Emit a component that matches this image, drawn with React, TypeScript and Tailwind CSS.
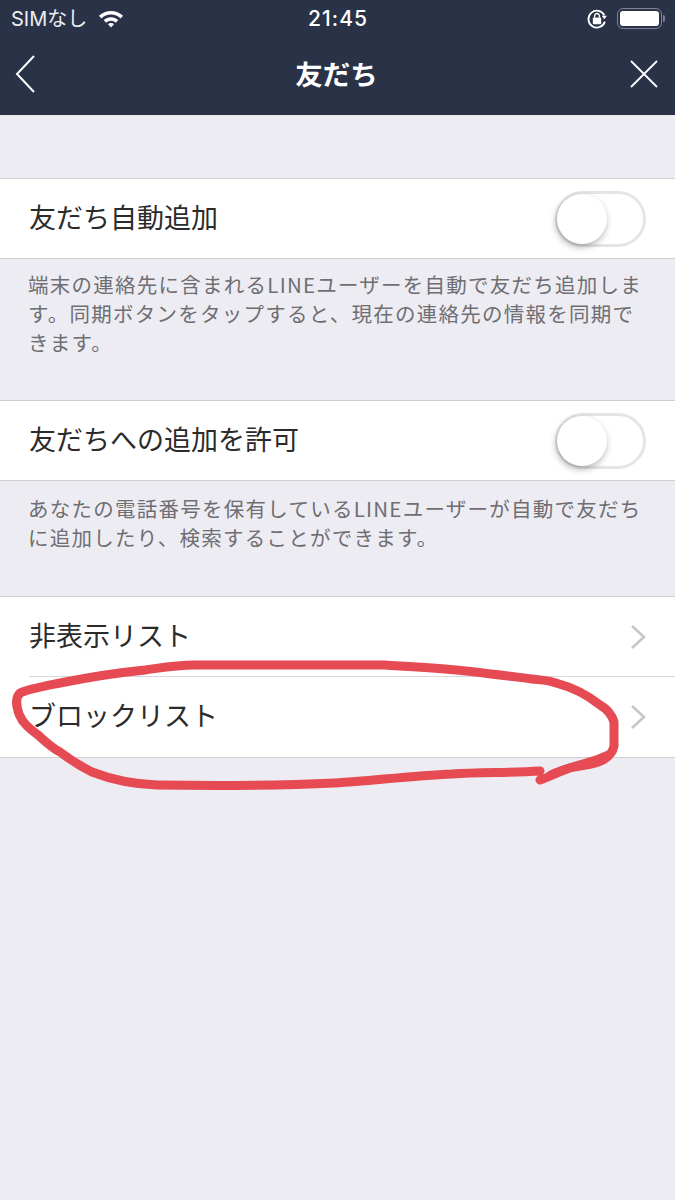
import React from "react";

const font = { fontFamily: '"Noto Sans CJK JP", "Liberation Sans", sans-serif' };

function Toggle() {
  return (
    <div className="relative h-[56px] w-[91px] rounded-full border-[3px] border-[#e5e5e7] bg-white">
      <div className="absolute left-[-1px] top-[0px] h-[50px] w-[50px] rounded-full bg-white shadow-[-1px_3px_7px_rgba(0,0,0,0.3)]" />
    </div>
  );
}

function ToggleRow({ label }: { label: string }) {
  return (
    <div className="flex h-[81px] items-center justify-between border-y border-[#d0d0d3] bg-white pl-[29px] pr-[29px]">
      <span className="pb-[5px] text-[27px] leading-none text-[#2b2b2b]">{label}</span>
      <Toggle />
    </div>
  );
}

function Chevron() {
  return (
    <svg width="16" height="26" viewBox="0 0 16 26" fill="none" stroke="#c6c6c9" strokeWidth="2.6">
      <path d="M2 2 L14 13 L2 24" />
    </svg>
  );
}

function LinkRow({ label, last }: { label: string; last?: boolean }) {
  return (
    <div className="flex h-[80px] items-center bg-white pl-[29px]">
      <div className={`flex h-full flex-1 items-center justify-between pr-[29px] ${last ? "" : "border-b border-[#d8d8da]"}`}>
        <span className="pb-[5px] text-[27px] leading-none text-[#2b2b2b]">{label}</span>
        <Chevron />
      </div>
    </div>
  );
}

export default function App() {
  return (
    <div style={font} className="relative h-[1200px] w-[675px] overflow-hidden bg-[#edecf2]">
      <header className="h-[115px] bg-[#293247] text-white">
        <div className="flex h-[37px] items-center justify-between pl-[11px] pr-[10px]">
          <div className="flex flex-1 items-center gap-[11px]">
            <span className="text-[20px] leading-none text-[#eceef2]" style={{ fontFamily: '"Inter", "Noto Sans CJK JP", sans-serif' }}>SIMなし</span>
            <svg width="26" height="20" viewBox="0 0 26 20" fill="#fff">
              <path d="M13 2C8.4 2 4.3 3.8 1 6.8l2.4 2.6C5.9 7 9.3 5.6 13 5.6s7.1 1.4 9.6 3.8L25 6.8C21.7 3.8 17.6 2 13 2Z" />
              <path d="M13 8.2c-2.8 0-5.3 1.1-7.3 2.9l2.4 2.6c1.3-1.2 3-2 4.9-2s3.6.8 4.9 2l2.4-2.6c-2-1.8-4.5-2.9-7.3-2.9Z" />
              <path d="M13 14c-1.2 0-2.2.5-3 1.2l3 3.3 3-3.3c-.8-.7-1.8-1.2-3-1.2Z" />
            </svg>
          </div>
          <span className="text-[21px] font-medium leading-none tracking-[1px]" style={{ fontFamily: '"Inter", sans-serif' }}>21:45</span>
          <div className="flex flex-1 items-center justify-end gap-[9px]">
            <svg width="22" height="22" viewBox="0 0 21 21" fill="none">
              <path d="M17.5 7A8 8 0 1 0 18 13" stroke="#fff" strokeWidth="1.7" />
              <path d="M15 7.5h5l-2.5 3.2Z" fill="#fff" />
              <rect x="6.5" y="9" width="8" height="6.5" rx="1" fill="#fff" />
              <path d="M8.2 9V7.6a2.3 2.3 0 0 1 4.6 0V9" stroke="#fff" strokeWidth="1.3" />
            </svg>
            <div className="flex items-center gap-[1px]">
              <div className="h-[21px] w-[45px] rounded-[6px] border-[1.5px] border-[#7d8496] p-[2px]">
                <div className="h-full w-full rounded-[3px] bg-white" />
              </div>
              <div className="h-[7px] w-[2px] rounded-r-full bg-[#7d8496]" />
            </div>
          </div>
        </div>
        <div className="flex h-[78px] items-center justify-between pb-[4px] pl-[15px] pr-[17px]">
          <div className="flex-1">
            <svg width="20" height="38" viewBox="0 0 20 38" fill="none" stroke="#fff" strokeWidth="2">
              <path d="M19 1 L2 19 L19 37" />
            </svg>
          </div>
          <span className="text-[27.5px] font-bold leading-none">友だち</span>
          <div className="flex flex-1 justify-end">
            <svg width="28" height="28" viewBox="0 0 28 28" fill="none" stroke="#fff" strokeWidth="1.8">
              <path d="M1 1 L27 27 M27 1 L1 27" />
            </svg>
          </div>
        </div>
      </header>

      <section className="mt-[63px]">
        <ToggleRow label="友だち自動追加" />
        <p className="h-[141px] px-[28px] pt-[11px] text-[20.5px] leading-[29px] tracking-[1.25px] text-[#6e6e73]">
          端末の連絡先に含まれるLINEユーザーを自動で友だち追加します。同期ボタンをタップすると、現在の連絡先の情報を同期できます。
        </p>
      </section>

      <section>
        <ToggleRow label="友だちへの追加を許可" />
        <p className="h-[115px] px-[28px] pt-[13px] text-[20.5px] leading-[29px] tracking-[1.25px] text-[#6e6e73]">
          あなたの電話番号を保有しているLINEユーザーが自動で友だちに追加したり、検索することができます。
        </p>
      </section>

      <section className="border-y border-[#d0d0d3]">
        <LinkRow label="非表示リスト" />
        <LinkRow label="ブロックリスト" last />
      </section>

      <svg className="pointer-events-none absolute left-0 top-0" width="675" height="800" viewBox="0 0 675 800" fill="none">
        <path
          d="M540 780 C550 777 560 771 570 768 C582 765 595 765 603 760 C610 756 613 752 614 746 L614 722 C612 715 607 709 600 705 C590 697 575 688 556 683 C548 680 540 680 532 679 C500 675 470 671 445 669 C420 667 400 666 385 665 L335 665 L195 665 C175 665 160 668 145 670 C115 673 85 678 60 683 C45 686 28 689 20 693 C15 698 16 705 19 714 C23 724 30 729 38 735 C45 741 52 748 60 752 C72 761 82 767 92 772 C110 779 130 784 157 785 C220 786 290 785 335 783 C370 781 410 776 452 774 C480 772 510 773 540 771"
          stroke="#e64a53"
          strokeWidth="9"
          strokeLinecap="round"
          strokeLinejoin="round"
        />
        <path d="M540 779 C555 775 565 768 578 765 C590 762 600 762 608 752 L596 757 C580 762 565 765 550 772 Z" fill="#e64a53" stroke="#e64a53" strokeWidth="3" />
      </svg>
    </div>
  );
}
